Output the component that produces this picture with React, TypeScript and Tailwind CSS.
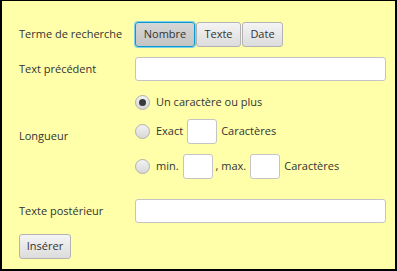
import React from "react";

const font = { fontFamily: '"Open Sans", "Noto Sans", sans-serif' };

function ToggleButton({ label, width, selected }: { label: string; width: string; selected?: boolean }) {
  return (
    <button
      className={
        selected
          ? `${width} h-[25px] rounded-[3px] border border-[#0b9ad0] bg-gradient-to-b from-[#d6d6d6] to-[#c4c4c4] text-[11px] text-[#333] shadow-[0_0_0_1px_#7fd0ee]`
          : `${width} h-[25px] rounded-[3px] border border-[#b3b3b3] bg-gradient-to-b from-[#f4f4f4] to-[#dcdcdc] text-[11px] text-[#333]`
      }
    >
      {label}
    </button>
  );
}

function Radio({ checked }: { checked?: boolean }) {
  return (
    <span className="flex h-[15px] w-[15px] shrink-0 items-center justify-center rounded-full border border-[#b0b0b0] bg-gradient-to-b from-[#f2f2f2] to-[#d8d8d8]">
      {checked && <span className="h-[7px] w-[7px] rounded-full bg-[#3a3a3a]" />}
    </span>
  );
}

function SmallInput() {
  return <input className="h-[25px] w-[30px] rounded-[3px] border border-[#c4c4c4] bg-white outline-none" />;
}

export default function App() {
  return (
    <div
      style={font}
      className="h-[271px] w-[397px] border-b-2 border-l-2 border-r-2 border-t border-black bg-[#ffffaa] pl-[17px] pt-[21px] text-[11px] text-[#333]"
    >
      <div className="flex h-[25px] items-center">
        <span className="w-[116px]">Terme de recherche</span>
        <div className="flex gap-[1px]">
          <ToggleButton label="Nombre" width="w-[60px]" selected />
          <ToggleButton label="Texte" width="w-[45px]" />
          <ToggleButton label="Date" width="w-[41px]" />
        </div>
      </div>

      <div className="mt-[10px] flex h-[24px] items-center">
        <span className="w-[116px]">Text précédent</span>
        <input className="h-[24px] w-[251px] rounded-[3px] border border-[#c4c4c4] bg-white outline-none" />
      </div>

      <div className="mt-[13px] flex items-center">
        <span className="w-[116px]">Longueur</span>
        <div className="flex flex-col">
          <div className="flex h-[16px] items-center gap-[6px]">
            <Radio checked />
            <span>Un caractère ou plus</span>
          </div>
          <div className="mt-[9px] flex h-[25px] items-center">
            <Radio />
            <span className="ml-[6px]">Exact</span>
            <span className="ml-[4px]"><SmallInput /></span>
            <span className="ml-[4px]">Caractères</span>
          </div>
          <div className="mt-[10px] flex h-[25px] items-center">
            <Radio />
            <span className="ml-[6px]">min.</span>
            <span className="ml-[4px]"><SmallInput /></span>
            <span className="ml-[3px]">, max.</span>
            <span className="ml-[4px]"><SmallInput /></span>
            <span className="ml-[4px]">Caractères</span>
          </div>
        </div>
      </div>

      <div className="mt-[20px] flex h-[24px] items-center">
        <span className="w-[116px]">Texte postérieur</span>
        <input className="h-[24px] w-[251px] rounded-[3px] border border-[#c4c4c4] bg-white outline-none" />
      </div>

      <button className="mt-[11px] h-[25px] w-[52px] rounded-[3px] border border-[#b3b3b3] bg-gradient-to-b from-[#f4f4f4] to-[#dcdcdc] text-[11px] text-[#333]">
        Insérer
      </button>
    </div>
  );
}
